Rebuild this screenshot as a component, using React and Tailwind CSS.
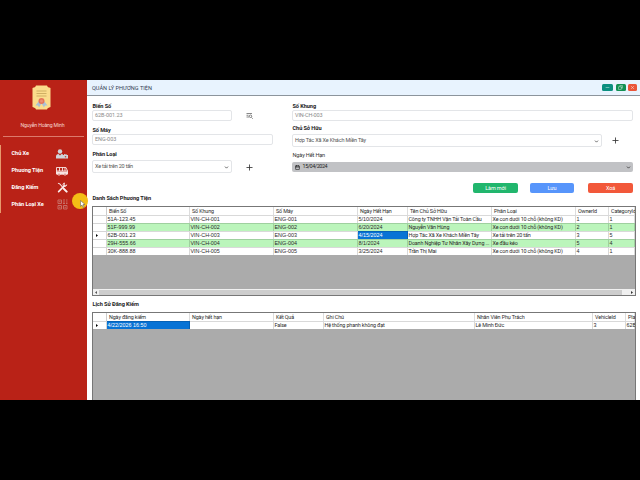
import React from "react";
import { Plus, ChevronDown, Calendar, Minus, Copy, X } from "lucide-react";

const vehicles = [
  ["51A-123.45", "VIN-CH-001", "ENG-001", "5/10/2024", "Công ty TNHH Vận Tải Toàn Cầu", "Xe con dưới 10 chỗ (không KD)", "1", "1"],
  ["51F-999.99", "VIN-CH-002", "ENG-002", "6/20/2024", "Nguyễn Văn Hùng", "Xe con dưới 10 chỗ (không KD)", "2", "1"],
  ["62B-001.23", "VIN-CH-003", "ENG-003", "4/15/2024", "Hợp Tác Xã Xe Khách Miền Tây", "Xe tải trên 20 tấn", "3", "5"],
  ["29H-555.66", "VIN-CH-004", "ENG-004", "8/1/2024", "Doanh Nghiệp Tư Nhân Xây Dựng ...", "Xe đầu kéo", "5", "4"],
  ["30K-888.88", "VIN-CH-005", "ENG-005", "3/25/2024", "Trần Thị Mai", "Xe con dưới 10 chỗ (không KD)", "4", "1"],
];

const vehicleColumns = ["Biển Số", "Số Khung", "Số Máy", "Ngày Hết Hạn", "Tên Chủ Sở Hữu", "Phân Loại", "OwnerId", "CategoryId"];

const historyColumns = ["Ngày đăng kiểm", "Ngày hết hạn", "Kết Quả", "Ghi Chú", "Nhân Viên Phụ Trách", "VehicleId", "Pla"];
const history = [["4/22/2026 16:50", "", "False", "Hệ thống phanh không đạt", "Lê Minh Đức", "3", "62B"]];

const menu = [
  { label: "Chủ Xe", icon: OwnerIcon },
  { label: "Phương Tiện", icon: BusIcon },
  { label: "Đăng Kiểm", icon: ToolsIcon },
  { label: "Phân Loại Xe", icon: CategoryIcon },
];

function OwnerIcon() {
  return (
    <svg viewBox="0 0 24 20" className="w-3 h-2.5" fill="#cfd4da">
      <circle cx="8" cy="5" r="4.5" />
      <path d="M0 19v-4c0-3 2-5 5-5l3 3 3-3c2 0 3 1 3 2v7z" />
      <path d="M14 12h2v-2h5v2h3v7h-10zM17.5 11v1h2v-1z" />
      <circle cx="19" cy="15.5" r="1.6" fill="#c0392b" />
    </svg>
  );
}

function BusIcon() {
  return (
    <svg viewBox="0 0 24 20" className="w-3 h-2.5" fill="none" stroke="#f8e5e3" strokeWidth="1.8">
      <path d="M1 3h19l3 7v6H1z" />
      <path d="M1 10h22M7 3v7M13 3v7M18 3v7" />
      <path d="M1 12h22v4H1z" fill="#f8e5e3" />
      <circle cx="6" cy="16.5" r="2" fill="#b92217" />
      <circle cx="18" cy="16.5" r="2" fill="#b92217" />
    </svg>
  );
}

function ToolsIcon() {
  return (
    <svg viewBox="0 0 24 24" className="w-[11px] h-[11px]" fill="none" stroke="#fbeeee" strokeLinecap="round">
      <path d="M3 3l3 1 12 14" strokeWidth="2.2" />
      <path d="M15 15l6 6" strokeWidth="4.5" />
      <path d="M3.5 21L16 8.5" strokeWidth="3.5" />
      <path d="M21 7a4 4 0 1 1-5-5l0 4 2 2z" strokeWidth="2" />
    </svg>
  );
}

function CategoryIcon() {
  return (
    <svg viewBox="0 0 22 22" className="w-[11px] h-[11px]" fill="none" stroke="#c76f66" strokeWidth="2">
      <path d="M2 2h7v7H2zM2 13h7v7H2zM13 13h7v7h-7z" />
      <path d="M12 2h4M18 2h3M12 6h4M18 6h3M12 9h4M18 9h3M4 5.5h3M4 16.5h3M15 16.5h3" />
    </svg>
  );
}

function CertificateLogo() {
  return (
    <svg viewBox="0 0 38 50" className="w-[19px] h-[25px]">
      <path d="M8 1h22c1 3 3 4 7 5v38c-4 1-6 2-7 5H8c-1-3-3-4-7-5V6c4-1 6-2 7-5z" fill="#fbdc8c" />
      <path d="M9 12h20M9 17h20M9 22h20" stroke="#c9a95f" strokeWidth="1.8" />
      <path d="M14 32l-7 9 5 0 2 4 5-8zM24 32l7 9-5 0-2 4-5-8z" fill="#a9c1d8" />
      <circle cx="19" cy="32" r="6" fill="#e5755a" />
      <circle cx="19" cy="32" r="3" fill="#ee8f73" />
    </svg>
  );
}

function SearchListIcon() {
  return (
    <svg viewBox="0 0 14 14" className="w-[7px] h-[7px]" fill="none" stroke="#555" strokeWidth="1.4">
      <path d="M1 3h11M1 6.5h4M1 10h5M11 11l2.5 2.5" />
      <circle cx="9" cy="8.5" r="2.5" />
    </svg>
  );
}

function Label({ children, light }) {
  return (
    <div className={`h-2 pl-[0.5px] leading-2 text-[5.6px] ${light ? "tracking-[-0.16px] text-[#333]" : "tracking-[-0.08px] font-bold text-[#222]"}`}>
      {children}
    </div>
  );
}

function Field({ className, children }) {
  return (
    <div className={`flex items-center justify-between rounded-[2px] border border-[#e3e5e8] pl-[2px] pr-[2.5px] pt-px text-[5.5px] leading-none ${className}`}>
      {children}
    </div>
  );
}

// Plate numbers, codes and dates are set a little wider than words
const isCode = (text) => /^[0-9A-Z./:\- ]+$/.test(text);

function DataTable({ columns, rows, template, current, selected }) {
  return (
    <div className="text-[5.4px] leading-[8px] text-[#2a2a2a]">
      <div className={`grid ${template} h-2 bg-white`}>
        <div className="border-r border-[#ccc]"></div>
        {columns.map((column) => (
          <div key={column} className="whitespace-nowrap border-r border-[#ddd] pl-[2px] tracking-[-0.13px]">
            {column}
          </div>
        ))}
      </div>
      {rows.map((row, index) => (
        <div key={index} className={`grid ${template} h-2 ${index % 2 ? "bg-[#bbf5bb]" : "bg-white"}`}>
          <div className="flex items-center border-r border-t border-[#d5d5d5] bg-white pl-[2.5px]">
            {index === current && (
              <svg viewBox="0 0 4 6" className="w-[2px] h-[3px]">
                <path d="M0 0l4 3-4 3z" />
              </svg>
            )}
          </div>
          {row.map((cell, i) => (
            <div
              key={i}
              className={`h-2 whitespace-nowrap border-r border-t border-black/15 pl-[0.5px] leading-[7.5px] ${
                isCode(cell) ? "font-['Liberation_Sans',sans-serif]" : "tracking-[-0.14px]"
              } ${index === current && i === selected ? "bg-[#0873d5] text-white" : ""}`}
            >
              {cell}
            </div>
          ))}
        </div>
      ))}
    </div>
  );
}

function Sidebar() {
  return (
    <aside className="relative w-[87px] shrink-0 bg-[#b92217] text-white">
      <div className="flex h-[56px] flex-col items-center pr-[5px] pt-[5px]">
        <CertificateLogo />
        <div className="mt-[11px] pl-[3px] text-[5.2px] leading-2 tracking-[-0.18px] text-[#f6d5d2]">Nguyễn Hoàng Minh</div>
      </div>
      <div className="mx-[3px] h-px bg-[#dc7a6c]"></div>
      <div className="mt-[8px] border-l border-[#e79a6c]">
        {menu.map(({ label, icon: Icon }) => (
          <div key={label} className="flex h-[17px] items-center justify-between pl-[10.5px] pr-[19px]">
            <span className="text-[5.6px] font-bold tracking-[-0.05px]">{label}</span>
            <span className="flex w-3 justify-center">
              <Icon />
            </span>
          </div>
        ))}
      </div>
      {/* Pointer with click highlight */}
      <div className="absolute left-[72px] top-[113px] z-10 h-4 w-4 rounded-full bg-[#f4bd16]">
        <svg viewBox="0 0 10 16" className="absolute left-2 top-[7px] h-[8px] w-[5px]" fill="#fff" stroke="#555" strokeWidth="1">
          <path d="M1 1v12l3-3 2 5 2-1-2-5h4z" />
        </svg>
      </div>
    </aside>
  );
}

function VehicleForm() {
  return (
    <div className="flex h-[77px] pl-[5px] pr-[7px] pt-[6px]">
      <div className="w-[200px]">
        <Label>Biển Số</Label>
        <div className="flex items-center">
          <Field className="h-[11px] w-[140px] tracking-[-0.05px] text-[#8a8a8a]">62B-001.23</Field>
          <span className="ml-[14px]">
            <SearchListIcon />
          </span>
        </div>
        <div className="mt-[5px]">
          <Label>Số Máy</Label>
        </div>
        <Field className="h-[11px] w-[181px] tracking-[-0.05px] text-[#8a8a8a]">ENG-003</Field>
        <div className="mt-[5px]">
          <Label>Phân Loại</Label>
        </div>
        <div className="mt-[2px] flex items-center">
          <Field className="h-[13px] w-[140px] tracking-[-0.2px] text-[#555]">
            <span>Xe tải trên 20 tấn</span>
            <ChevronDown className="h-[5px] w-[5px] text-[#333]" strokeWidth={3.5} />
          </Field>
          <Plus className="ml-[13px] mt-[2px] h-[9px] w-[9px] text-[#333]" strokeWidth={2.2} />
        </div>
      </div>
      <div className="flex-1">
        <Label>Số Khung</Label>
        <Field className="h-[11px] tracking-[-0.12px] text-[#8a8a8a]">VIN-CH-003</Field>
        <div className="mt-[3px]">
          <Label>Chủ Sở Hữu</Label>
        </div>
        <div className="mt-[2px] flex items-center">
          <Field className="h-[13px] w-[310px] tracking-[-0.17px] text-[#555]">
            <span>Hợp Tác Xã Xe Khách Miền Tây</span>
            <ChevronDown className="h-[5px] w-[5px] text-[#333]" strokeWidth={3.5} />
          </Field>
          <Plus className="ml-[9px] h-[9px] w-[9px] text-[#333]" strokeWidth={2.2} />
        </div>
        <div className="mt-[4px]">
          <Label light>Ngày Hết Hạn</Label>
        </div>
        <div className="mt-[3px] flex h-[10px] items-center rounded-[2px] bg-[#c1c2c5] pl-[3px] pr-[2.5px] text-[5.4px] leading-none text-[#222]">
          <Calendar className="mr-[2.5px] h-[5px] w-[5px]" strokeWidth={3} />
          <span className="flex-1 tracking-[-0.4px]">15/04/2024</span>
          <ChevronDown className="h-[5px] w-[5px]" strokeWidth={3.5} />
        </div>
      </div>
    </div>
  );
}

export default function App() {
  return (
    <div className="h-[480px] w-[640px] overflow-hidden bg-black py-[80px] font-[Roboto,sans-serif]">
      <div className="flex h-[320px] bg-white">
        <Sidebar />
        <main className="flex min-w-0 flex-1 flex-col">
          <header className="flex h-4 items-center justify-between border-b border-[#8c949c] bg-[#e8f3fe] pl-[5px] pr-[3.5px]">
            <h1 className="pt-[2px] text-[5.6px] leading-none text-[#344054]">QUẢN LÝ PHƯƠNG TIỆN</h1>
            <div className="flex gap-[2.5px] text-white">
              <span className="flex h-[7px] w-[11px] items-center justify-center rounded-[1.5px] bg-[#0b8f80]">
                <Minus className="h-[5px] w-[5px]" />
              </span>
              <span className="flex h-[7px] w-[10px] items-center justify-center rounded-[1.5px] bg-[#119052]">
                <Copy className="h-[5px] w-[5px] rotate-90" />
              </span>
              <span className="flex h-[7px] w-[8.5px] items-center justify-center rounded-[1.5px] bg-[#ea5539]">
                <X className="h-[5px] w-[5px]" />
              </span>
            </div>
          </header>

          <VehicleForm />

          {/* Actions */}
          <div className="mt-[10px] flex h-[10px] justify-end pr-[7px] text-center text-[5.5px] leading-[10px] tracking-[-0.1px] text-white">
            <button className="mr-[12px] w-[45px] rounded-[2px] bg-[#21b66d]">Làm mới</button>
            <button className="mr-[14px] w-[44px] rounded-[2px] bg-[#5795fb]">Lưu</button>
            <button className="w-[45px] rounded-[2px] bg-[#f2583a]">Xoá</button>
          </div>

          <div className="mt-[1px] pl-[5px]">
            <Label>Danh Sách Phương Tiện</Label>
          </div>
          <div className="ml-[5px] mt-[4px] flex h-[90px] w-[544px] flex-col overflow-hidden border border-[#777] bg-[#ababab]">
            <DataTable
              columns={vehicleColumns}
              rows={vehicles}
              template="grid-cols-[14px_83px_84px_84px_50px_84px_84px_33px_26px]"
              current={2}
              selected={3}
            />
            <div className="mt-auto flex h-[6px] items-center justify-between bg-[#f0f0f0] px-[2px]">
              <svg viewBox="0 0 4 6" className="h-[3px] w-[2px]">
                <path d="M4 0L0 3l4 3z" fill="#555" />
              </svg>
              <div className="ml-[2px] mr-[9px] h-[5px] flex-1 bg-[#cdcdcd]"></div>
              <svg viewBox="0 0 4 6" className="h-[3px] w-[2px]">
                <path d="M0 0l4 3-4 3z" fill="#333" />
              </svg>
            </div>
          </div>

          <div className="mt-[4px] pl-[5px]">
            <Label>Lịch Sử Đăng Kiểm</Label>
          </div>
          <div className="ml-[5px] mt-[4px] w-[544px] flex-1 overflow-hidden border border-b-0 border-[#777] bg-[#ababab]">
            <DataTable
              columns={historyColumns}
              rows={history}
              template="grid-cols-[14px_83px_84px_50px_151px_118px_33px_9px]"
              current={0}
              selected={0}
            />
          </div>
        </main>
      </div>
    </div>
  );
}
